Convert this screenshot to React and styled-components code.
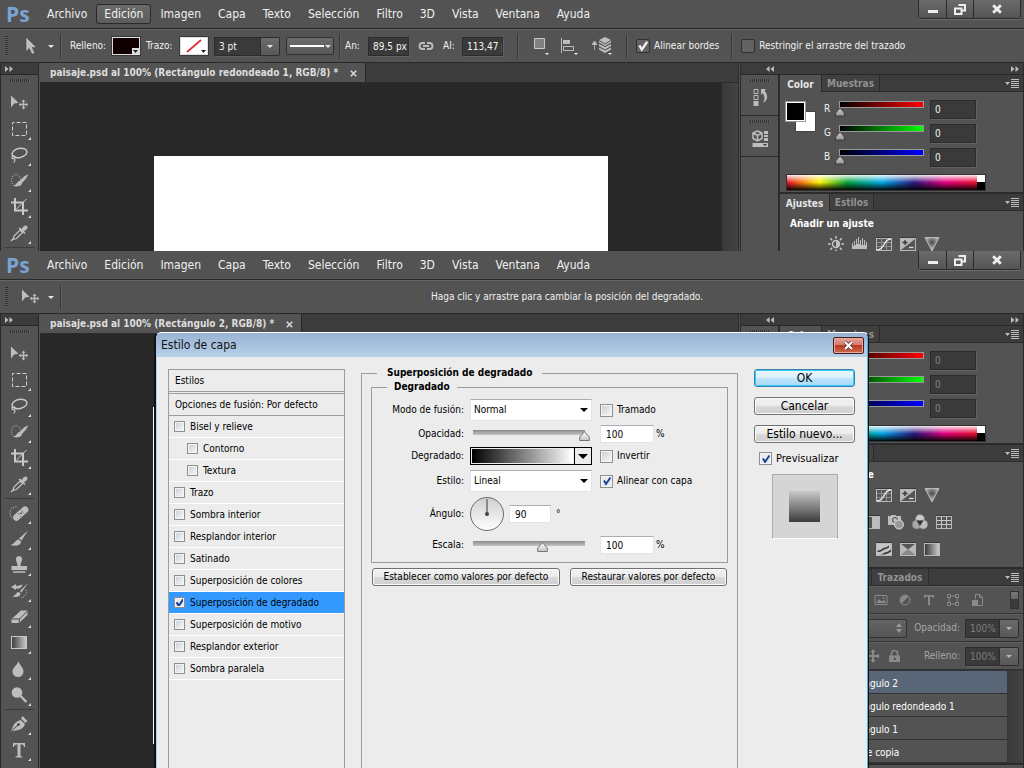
import { useId } from "react";
import styled, { createGlobalStyle, css } from "styled-components";

const uiFont = '"DejaVu Sans Condensed", "DejaVu Sans", sans-serif';
const logoFont = '"Open Sans", "Noto Sans", sans-serif';

const tick = (color) =>
  `url("data:image/svg+xml,%3Csvg xmlns='http://www.w3.org/2000/svg' viewBox='0 0 10 10'%3E%3Cpath d='M2 4.5 4 8 8.5 1.5' fill='none' stroke='%23${color}' stroke-width='2'/%3E%3C/svg%3E")`;
const thumb = (light, dark, line) =>
  `url("data:image/svg+xml,%3Csvg xmlns='http://www.w3.org/2000/svg' viewBox='0 0 11 10'%3E%3Cdefs%3E%3ClinearGradient id='g' x2='0' y2='1'%3E%3Cstop stop-color='%23${light}'/%3E%3Cstop offset='1' stop-color='%23${dark}'/%3E%3C/linearGradient%3E%3C/defs%3E%3Cpath d='M5.5.7 10.3 6v3.5H.7V6z' fill='url(%23g)' stroke='%23${line}'/%3E%3C/svg%3E")`;

const GlobalStyle = createGlobalStyle`
  * {
    box-sizing: border-box;
  }
  body {
    margin: 0;
    overflow: hidden;
    background: #535353;
    font-family: ${uiFont};
    font-size: 10px;
    line-height: 14px;
    color: #f0f0f0;
  }
  button, input, select {
    margin: 0;
    padding: 0;
    border: 0;
    border-radius: 0;
    background: none;
    font: inherit;
    color: inherit;
    appearance: none;
  }
  svg {
    display: block;
    flex: none;
  }
`;

/* ---------- window shell ---------- */

const Screen = styled.main`
  display: flex;
  flex-direction: column;
  height: 100vh;
`;

const Frame = styled.section`
  position: relative;
  display: flex;
  flex-direction: column;
  flex: ${({ $height }) => ($height ? `0 0 ${$height}` : "1 1 0")};
  min-height: 0;
  overflow: hidden;
  background: #535353;
`;

const MenuBar = styled.nav`
  display: flex;
  align-items: center;
  flex: none;
  height: 29px;
  border-bottom: 1px solid #282828;
  font-size: 12px;
`;

const Logo = styled.span`
  width: 39px;
  padding-left: 6px;
  font-family: ${logoFont};
  font-size: 21px;
  line-height: 24px;
  font-weight: 700;
  color: #79a3d4;
`;

const MenuItem = styled.button`
  height: 20px;
  padding: 0 7px;
  margin-right: 1px;
  border: 1px solid transparent;
  border-radius: 3px;
  ${({ $open }) =>
    $open &&
    css`
      border-color: #2a2a2a;
      background: linear-gradient(#6a6a6a, #5c5c5c);
    `}
`;

const WindowButtons = styled.div`
  display: flex;
  align-self: flex-start;
  margin: 0 3px 0 auto;
  border: 1px solid #2b2b2b;
  border-top: 0;
  border-radius: 0 0 3px 3px;
  box-shadow: 0 1px 0 #6c6c6c;
`;

const WindowButton = styled.button`
  display: grid;
  place-items: center;
  width: ${({ $wide }) => ($wide ? 47 : 27)}px;
  height: 18px;
  background: linear-gradient(#6b6b6b, #545454);
  & + & {
    border-left: 1px solid #2b2b2b;
  }
`;

const OptionsBar = styled.div`
  display: flex;
  align-items: center;
  flex: none;
  height: 33px;
  padding-left: 5px;
  border-top: 1px solid #666;
`;

const Grip = styled.span`
  flex: none;
  width: ${({ $flat }) => ($flat ? 20 : 3)}px;
  height: ${({ $flat }) => ($flat ? 3 : 20)}px;
  background: repeating-linear-gradient(
    ${({ $flat }) => ($flat ? "90deg" : "180deg")},
    #2f2f2f 0 1px,
    #5f5f5f 1px 2px
  );
`;

const Separator = styled.span`
  flex: none;
  width: 2px;
  height: 24px;
  margin: 0 ${({ $after = 0 }) => $after}px 0 ${({ $before = 0 }) => $before}px;
  border-left: 1px solid #373737;
  border-right: 1px solid #5f5f5f;
`;

const ToolButton = styled.button`
  display: flex;
  align-items: center;
  justify-content: ${({ $split }) => ($split ? "flex-end" : "center")};
  flex: none;
  gap: 9px;
  width: ${({ $width }) => $width}px;
  height: 26px;
  padding-right: ${({ $split }) => ($split ? 6 : 0)}px;
`;

const OptionLabel = styled.label`
  flex: none;
  width: ${({ $width }) => $width}px;
  white-space: nowrap;
`;

const Swatch = styled.button`
  flex: none;
  width: 28px;
  height: 18px;
  margin-right: 6px;
  border: 1px solid #ddd;
  outline: 1px solid #3a3a3a;
  background: ${({ $color }) => $color};
`;

const DarkInput = styled.input`
  flex: none;
  width: ${({ $width }) => $width}px;
  height: 19px;
  padding: 0 0 0 4px;
  border: 1px solid #2c2c2c;
  background: #3a3a3a;
  box-shadow: 1px 1px 0 #626262;
  color: ${({ $dim }) => ($dim ? "#7e7e7e" : "#f4f4f4")};
`;

const StrokeWidth = styled.div`
  display: flex;
  width: 66px;
  margin-right: 6px;
`;

const DropButton = styled.button`
  display: grid;
  place-items: center;
  flex: none;
  width: 19px;
  height: 19px;
  border: 1px solid #2c2c2c;
  border-left: 0;
  border-radius: 0 2px 2px 0;
  background: linear-gradient(#6b6b6b, #585858);
`;

const StrokeStyle = styled.button`
  display: flex;
  align-items: center;
  justify-content: center;
  width: 48px;
  height: 18px;
  border: 1px solid #303030;
  border-radius: 2px;
  background: linear-gradient(#6b6b6b, #585858);
`;

const DarkCheck = styled.input`
  width: 14px;
  height: 14px;
  border: 1px solid #303030;
  border-radius: 2px;
  background: #626262;
  &:checked {
    background: ${tick("f0f0f0")} center / 12px no-repeat #626262;
  }
`;

const CheckLabel = styled.label`
  display: flex;
  align-items: center;
  gap: 4px;
  white-space: nowrap;
`;

const Hint = styled.p`
  flex: 1;
  margin: 0 0 0 48px;
  text-align: center;
`;

const Workspace = styled.div`
  display: flex;
  flex: 1;
  min-height: 0;
  border-top: 1px solid #282828;
`;

/* ---------- left tool column ---------- */

const Toolbox = styled.aside`
  display: flex;
  flex-direction: column;
  align-items: center;
  flex: none;
  width: 39px;
  border-left: 1px solid #2b2b2b;
  border-right: 1px solid #2b2b2b;
`;

const StripHead = styled.div`
  display: flex;
  align-items: center;
  justify-content: space-between;
  align-self: stretch;
  flex: none;
  height: 12px;
  padding: 0 ${({ $right = 4 }) => $right}px 0 ${({ $left = 4 }) => $left}px;
  border-bottom: 1px solid #282828;
  background: #3c3c3c;
`;

const ToolGroup = styled.div`
  position: relative;
  display: flex;
  flex-direction: column;
  width: 29px;
  & + & {
    margin-top: 1px;
    border-top: 1px solid #3b3b3b;
    padding-top: 1px;
  }
`;

const Tool = styled.button`
  display: flex;
  align-items: center;
  justify-content: center;
  position: relative;
  width: 29px;
  height: 26px;
  padding-right: 2px;
  ${({ $more }) =>
    $more &&
    css`
      &::after {
        content: "";
        position: absolute;
        right: 3px;
        bottom: 2px;
        border-left: 3px solid transparent;
        border-bottom: 3px solid #dcdcdc;
      }
    `}
`;

/* ---------- document ---------- */

const Document = styled.div`
  display: flex;
  flex-direction: column;
  flex: 1;
  min-width: 0;
  margin: 0 1px;
  border-right: 1px solid #2b2b2b;
  background: #282828;
`;

const TabStrip = styled.div`
  display: flex;
  flex: none;
  height: 20px;
  border-bottom: 1px solid #2b2b2b;
  background: #3c3c3c;
`;

const DocTab = styled.div`
  display: flex;
  align-items: center;
  gap: 12px;
  padding: 1px 8px 0 10px;
  border-right: 1px solid #282828;
  background: #535353;
  color: #dedede;
  font-weight: 700;
  white-space: nowrap;
`;

const View = styled.div`
  display: flex;
  flex: 1;
  min-height: 0;
`;

const Canvas = styled.div`
  flex: 1;
  min-width: 0;
  padding: 73px 0 0 ${({ $inset }) => $inset}px;
  overflow: hidden;
`;

const Artboard = styled.div`
  width: 454px;
  height: 337px;
  background: #fff;
`;

const ScrollTrack = styled.div`
  flex: none;
  width: 16px;
  background: linear-gradient(90deg, #393939, #434343);
`;

/* ---------- right dock ---------- */

const Dock = styled.aside`
  display: flex;
  flex-direction: column;
  flex: none;
  width: 284px;
  border-left: 1px solid #2b2b2b;
  border-right: 1px solid #2b2b2b;
`;

const DockBody = styled.div`
  display: flex;
  flex: 1;
  min-height: 0;
`;

const IconColumn = styled.div`
  flex: none;
  width: 39px;
  border-right: 2px solid #2b2b2b;
`;

const IconBlock = styled.div`
  display: flex;
  flex-direction: column;
  align-items: center;
  gap: 5px;
  height: 41px;
  padding-top: 4px;
  border-bottom: 1px solid #2b2b2b;
`;

const Panels = styled.div`
  flex: 1;
  min-width: 0;
`;

const Panel = styled.section`
  height: ${({ $height }) => $height};
  border-bottom: 2px solid #2b2b2b;
`;

const PanelTabs = styled.div`
  display: flex;
  height: 17px;
  border-bottom: 1px solid #2b2b2b;
  background: #3c3c3c;
`;

const PanelTab = styled.button`
  min-width: ${({ $width }) => $width}px;
  height: ${({ $active }) => ($active ? 17 : 16)}px;
  padding-top: 2px;
  border-right: 1px solid #2b2b2b;
  background: ${({ $active }) => ($active ? "#535353" : "#404040")};
  color: ${({ $active }) => ($active ? "#e6e6e6" : "#929292")};
  font-weight: 700;
`;

const PanelMenu = styled.button`
  margin: 0 4px 0 auto;
`;

const ColorBody = styled.div`
  display: flex;
  padding: 5px 0 5px 5px;
`;

const SwatchPair = styled.div`
  position: relative;
  width: 39px;
  height: 72px;
`;

const ColorChip = styled.button`
  position: absolute;
  left: ${({ $back }) => ($back ? 11 : 1)}px;
  top: ${({ $back }) => ($back ? 15 : 5)}px;
  width: 19px;
  height: 19px;
  ${({ $back }) =>
    $back
      ? css`
          background: #fff;
          outline: 1px solid #444;
        `
      : css`
          border: 1px solid #fff;
          outline: 1px solid #999;
          background: #000;
        `}
`;

const Channels = styled.div`
  display: flex;
  flex-direction: column;
`;

const Channel = styled.div`
  display: flex;
  align-items: center;
  height: 24px;
`;

const ChannelName = styled.label`
  width: 11px;
`;

const ChannelRange = styled.input`
  width: 95px;
  height: 18px;
  background: linear-gradient(90deg, #000, ${({ $color }) => $color}) 5px 2px / 83px 5px no-repeat,
    linear-gradient(#999, #999) 4px 1px / 85px 7px no-repeat;
  &::-webkit-slider-thumb {
    appearance: none;
    width: 10px;
    height: 10px;
    margin-top: 6px;
    background: ${thumb("d8d8d8", "8c8c8c", "383838")} center / 100% 100%;
  }
`;

const Spectrum = styled.div`
  display: flex;
  width: 200px;
  height: 17px;
  margin-left: 6px;
  border: 1px solid #333;
`;

const Hues = styled.div`
  flex: 1;
  background: linear-gradient(rgba(255, 255, 255, 0.9), rgba(255, 255, 255, 0) 50%, rgba(0, 0, 0, 0) 50%, rgba(0, 0, 0, 0.95)),
    linear-gradient(90deg, #e8112d, #fff200 17%, #00a13a 32%, #00a8e8 50%, #2e1a80 67%, #e5007e 83%, #e8112d);
`;

const Mono = styled.div`
  width: 8px;
  background: linear-gradient(#fff 50%, #000 50%);
`;

const PanelTitle = styled.h2`
  margin: 0;
  padding: 6px 0 0 10px;
  font-size: 10px;
  line-height: 14px;
  font-weight: 700;
  color: #fff;
`;

const IconRow = styled.div`
  display: flex;
  gap: 8px;
  height: 27px;
  padding: 5px 0 0 ${({ $inset }) => $inset}px;
`;

const LayerBar = styled.div`
  display: flex;
  align-items: center;
  justify-content: flex-end;
  height: 28px;
  padding-right: 4px;
  border-bottom: 1px solid #333;
  border-top: 1px solid #606060;
  color: #a6a6a6;
`;

const FilterIcons = styled.div`
  display: flex;
  gap: 8px;
  margin-right: 25px;
`;

const FilterSwitch = styled.button`
  width: 9px;
  height: 18px;
  border: 1px solid #333;
  background: linear-gradient(#777, #666 45%, #3a3a3a 45%);
`;

const BlendBox = styled.select`
  flex: 1;
  height: 19px;
  margin: 0 7px 0 4px;
  padding-left: 5px;
  border: 1px solid #333;
  border-radius: 2px;
  background: url("data:image/svg+xml,%3Csvg xmlns='http://www.w3.org/2000/svg' viewBox='0 0 6 10'%3E%3Cpath d='M0 4 3 0 6 4zM0 6l3 4 3-4z' fill='%23999'/%3E%3C/svg%3E")
      right 4px center / 6px 10px no-repeat,
    linear-gradient(#646464, #555);
`;

const LayerLabel = styled.label`
  width: 51px;
  padding-right: 5px;
  text-align: right;
`;

const LayerView = styled.div`
  display: flex;
  border-top: 1px solid #333;
`;

const LayerList = styled.ul`
  flex: 1;
  margin: 0;
  padding: 0;
  list-style: none;
`;

const Layer = styled.li`
  height: 23px;
  padding: 6px 0 0 59px;
  border-bottom: 1px solid #333;
  background: ${({ $selected }) => ($selected ? "#596678" : "#535353")};
  color: #fff;
`;

/* ---------- layer style dialog ---------- */

const Dialog = styled.div`
  position: absolute;
  top: 81px;
  bottom: -20px;
  left: 155px;
  width: 714px;
  display: flex;
  flex-direction: column;
  overflow: hidden;
  border: 1px solid #111;
  border-top-color: #fff;
  border-radius: 6px 6px 0 0;
  background: #ececec;
  box-shadow: -1px 0 0 #111, inset 1px 0 0 #b5cfec, inset -1px 0 0 #4fb4e6;
  color: #000;
`;

const TitleBar = styled.header`
  display: flex;
  align-items: center;
  justify-content: space-between;
  flex: none;
  height: 24px;
  margin-right: 1px;
  padding: 0 3px 0 5px;
  background: linear-gradient(#98b4d2, #b7d0ea);
  color: #111;
  font-size: 12px;
`;

const CloseButton = styled.button`
  display: grid;
  place-items: center;
  width: 31px;
  height: 17px;
  border: 1px solid #4a1a1a;
  border-radius: 2px;
  background: linear-gradient(#e6a59b, #d3786b 48%, #b93a23 50%, #cf6a4c);
  box-shadow: inset 0 0 0 1px #e3aca2;
`;

const DialogBody = styled.div`
  display: flex;
  align-items: stretch;
  flex: 1;
  min-height: 0;
  padding: 12px 13px 0 12px;
`;

const StyleList = styled.div`
  flex: none;
  width: 177px;
  border: 1px solid #9c9c9c;
`;

const ListHead = styled.div`
  height: ${({ $double }) => ($double ? 24 : 22)}px;
  padding: 4px 6px 0;
  border-bottom: ${({ $double }) => ($double ? "3px double" : "1px solid")} #9c9c9c;
`;

const StyleRow = styled.div`
  display: flex;
  align-items: center;
  gap: 5px;
  height: 22px;
  padding-left: ${({ $nested }) => ($nested ? 18 : 5)}px;
  border-bottom: 1px solid #fff;
  background: ${({ $selected }) => ($selected ? "#3399ff" : "none")};
`;

const LightCheck = styled.input`
  flex: none;
  width: ${({ $size = 11 }) => $size}px;
  height: ${({ $size = 11 }) => $size}px;
  border: 1px solid #8e8f8f;
  background: linear-gradient(135deg, #c8ccd4, #fafafa);
  box-shadow: inset 0 0 0 1px #f4f4f4;
  &:checked {
    background: ${tick("24418c")} center / 10px no-repeat #e4ecf6;
  }
`;

const Group = styled.fieldset`
  flex: 1;
  min-width: 0;
  margin: -3px 16px 0;
  padding: 0 9px;
  border: 1px solid #9c9c9c;
`;

const GroupTitle = styled.legend`
  margin-left: ${({ $inset }) => $inset}px;
  padding: 0 ${({ $space }) => $space}px;
  line-height: 14px;
  font-weight: 700;
`;

const Inner = styled.fieldset`
  min-width: 0;
  margin: 0;
  padding: 0 0 4px;
  border: 1px solid #9c9c9c;
`;

const Fields = styled.div`
  display: grid;
  grid-template-columns: 92px 124px 1fr;
  grid-template-rows: 24px 24px 20px 30px 36px 26px;
  column-gap: 6px;
  align-items: center;
  margin-top: 4px;
`;

const FieldLabel = styled.label`
  text-align: right;
`;

const LightSelect = styled.select`
  width: 122px;
  height: 22px;
  padding: 0 3px;
  border: 1px solid #dfe3ea;
  border-top-color: #aaadb3;
  background: url("data:image/svg+xml,%3Csvg xmlns='http://www.w3.org/2000/svg' viewBox='0 0 8 4'%3E%3Cpath d='M0 0h8L4 4z'/%3E%3C/svg%3E")
    right 3px center / 8px 4px no-repeat #fff;
`;

const LightInput = styled.input`
  width: ${({ $width }) => $width}px;
  height: 18px;
  padding: 0 5px;
  border: 1px solid #dfe3ea;
  border-top-color: #aaadb3;
  background: #fff;
`;

const Trailing = styled.div`
  display: flex;
  align-items: center;
  gap: 2px;
`;

const Range = styled.input`
  width: 118px;
  height: 16px;
  margin-left: 2px;
  background: linear-gradient(#8a8a8a, #c4c4c4) 1px 4px / 112px 5px no-repeat;
  &::-webkit-slider-thumb {
    appearance: none;
    width: 11px;
    height: 10px;
    margin-top: 3px;
    background: ${thumb("ffffff", "c4c4c4", "757575")} center / 100% 100%;
  }
`;

const GradientPicker = styled.button`
  display: grid;
  grid-template-columns: 1fr 17px;
  width: 122px;
  height: 18px;
  border: 1px solid #000;
`;

const GradientBar = styled.span`
  margin: 1px;
  background: linear-gradient(90deg, #000, #fff);
`;

const GradientArrow = styled.span`
  display: grid;
  place-items: center;
  border-left: 1px solid #000;
`;

const AngleCell = styled.div`
  display: flex;
  align-items: center;
  gap: 5px;
`;

const DefaultButtons = styled.div`
  display: flex;
  gap: 10px;
  padding: 5px 1px;
`;

const Side = styled.div`
  display: flex;
  flex-direction: column;
  flex: none;
  gap: 10px;
  width: 101px;
`;

const LightButton = styled.button`
  height: 18px;
  flex: ${({ $grow }) => ($grow ? `${$grow} 1 0` : "none")};
  border: 1px solid #707070;
  border-radius: 3px;
  background: linear-gradient(#f2f2f2, #ebebeb 50%, #dadada 50%, #cfcfcf);
  box-shadow: inset 0 0 0 1px #fafafa;
  white-space: nowrap;
  ${({ $large }) => $large && `font-size: 12px;`}
  ${({ $primary }) =>
    $primary &&
    css`
      border-color: #3c7fb1;
      background: linear-gradient(#eaf6fd, #d9f0fc 50%, #bee6fd 50%, #a7d9f5);
      box-shadow: inset 0 0 0 1px #35cdf5;
    `}
`;

const PreviewLabel = styled.label`
  display: flex;
  align-items: center;
  gap: 4px;
  height: 11px;
  padding-left: 5px;
  font-size: 11px;
`;

const PreviewBox = styled.div`
  display: grid;
  place-items: center;
  align-self: center;
  width: 66px;
  height: 65px;
  border: 1px solid #aaa;
  border-bottom-color: #fff;
  background: #d5d5d5;
`;

const PreviewFill = styled.div`
  width: 31px;
  height: 31px;
  background: linear-gradient(#c9c9c9, #3c3c3c);
`;

/* ---------- drawings ---------- */

const Icon = ({ size = 18, w = size, h = size, children }) => (
  <svg width={w} height={h} viewBox={`0 0 ${w} ${h}`} fill="#bdbdbd" aria-hidden="true">
    {children}
  </svg>
);

const Caret = ({ color = "#e6e6e6", w = 6 }) => (
  <svg width={w} height={w / 2} viewBox="0 0 6 3" aria-hidden="true">
    <path d="M0 0h6L3 3z" fill={color} />
  </svg>
);

const Chevrons = ({ left }) => (
  <Icon w={8} h={6}>
    <path d={left ? "M3.500 0v6L0 3zM8 0v6L4.500 3z" : "M0 0v6l3.500-3zM4.500 0v6L8 3z"} />
  </Icon>
);

const Cross = ({ size = 7, width = 2, color = "#d8d8d8" }) => (
  <svg width={size} height={size} viewBox="0 0 7 7" aria-hidden="true">
    <path d="M.8.8l5.400 5.400M6.200.8.8 6.200" stroke={color} strokeWidth={width} />
  </svg>
);

const MoveIcon = () => (
  <Icon>
    <path d="M1 1.500v12l3.200-4 4.300-.8z" />
    <path d="M13.500 5.500l2 2.200h-1.300V9.800h2.100V8.500l2 2-2 2v-1.300h-2.100v2.100h1.300l-2 2.200-2-2.200h1.300v-2.100h-2.100v1.300l-2-2 2-2v1.300h2.100V7.700h-1.300z" />
  </Icon>
);

const toolIcons = {
  Mover: <MoveIcon />,
  Marco: (
    <Icon>
      <rect x="2.500" y="2.500" width="14" height="13" fill="none" stroke="#d0d0d0" strokeDasharray="4 2" strokeDashoffset="2" />
    </Icon>
  ),
  Lazo: (
    <Icon>
      <ellipse cx="9.500" cy="7" rx="7.500" ry="4.500" fill="none" stroke="#c8c8c8" strokeWidth="1.500" transform="rotate(-12 9.500 7)" />
      <path d="M3 9.500c-2 1.500-1 4 1 3s1-3-.5-2.500M4 12.500c1.500 1 1 3-.5 4" fill="none" stroke="#c8c8c8" strokeWidth="1.200" />
    </Icon>
  ),
  "Selección rápida": (
    <Icon>
      <ellipse cx="6" cy="8.500" rx="4.500" ry="6" fill="none" stroke="#c8c8c8" strokeDasharray="1 1.500" />
      <path d="M18.500 2l-4.500 2.500-4.500 4.500 2.500 2 4-4.500zM9.500 9c-3 .5-2 3.500-6 4.500 3 1.500 8.500 1 8.500-2.500z" />
    </Icon>
  ),
  Recortar: (
    <Icon>
      <path d="M5 0v12.500h13M1 4.500h12V17" fill="none" stroke="#c8c8c8" strokeWidth="2" />
      <path d="M6.500 11 16.500 1" fill="none" stroke="#c8c8c8" />
    </Icon>
  ),
  Cuentagotas: (
    <Icon>
      <path d="M3 15.500l1-3.500 6-6 2.500 2.500-6 6zM1 17l2-2" fill="none" stroke="#c8c8c8" strokeWidth="1.200" />
      <path d="M8.500 4.500l1.500-1L12 5c1-3 3.500-4.500 5-3s0 4-3 5l1.500 2-1 1z" />
    </Icon>
  ),
  "Pincel corrector": (
    <Icon w={20} h={18}>
      <path d="M8 15c-5 1-7-2-7-6s3-7 8-6" fill="none" stroke="#d0d0d0" strokeDasharray="1 1.500" />
      <rect x="2.500" y="6" width="18" height="6.500" rx="3" transform="rotate(-42 12 9)" />
      <path d="M8.500 9l4 4M11.500 5.500l4 4.500" stroke="#555" strokeDasharray="1 1" />
      <path d="M12 8.500v1.500" stroke="#444" strokeWidth="1.500" />
    </Icon>
  ),
  Pincel: (
    <Icon>
      <path d="M18 .5 9 8.500l2.500 2zM8.500 9.500c-3 0-3 4-8 5.500 4 1.500 10.500 1 10.500-3.500z" />
    </Icon>
  ),
  Tampón: (
    <Icon>
      <path d="M9 0a3.300 3.300 0 0 1 3 4.500C11.500 6 10.500 7 10.500 10H17v4H1.500v-4h6C7.500 7 6.500 6 6 4.500A3.300 3.300 0 0 1 9 0zM3 15.200h12.500v1.500H3z" />
    </Icon>
  ),
  Historia: (
    <Icon>
      <path d="M18 1 10 9l1.500 1.500zM9 10c-3 0-2.500 3-7 4.500 4 1 8.500.5 8.500-3zM1 5l5-3v2c4 0 5-2 6.500-1C11 6.500 9 7 6 6.500V8z" />
      <path d="M16 8c1 4-1 7-5 8" fill="none" stroke="#c8c8c8" strokeDasharray="1 1.500" />
    </Icon>
  ),
  Borrador: (
    <Icon>
      <path d="M11 2.500h6.500V7L9 15H1.500V11z" />
      <path d="M2 11h7.500l8-8M9.500 11 9 15" fill="none" stroke="#4a4a4a" />
    </Icon>
  ),
  Degradado: (
    <Icon>
      <defs>
        <linearGradient id="toolGradient">
          <stop stopColor="#3a3a3a" />
          <stop offset="1" stopColor="#ccc" />
        </linearGradient>
      </defs>
      <rect x="1.500" y="2.500" width="15" height="12" fill="url(#toolGradient)" stroke="#c8c8c8" />
    </Icon>
  ),
  Desenfocar: (
    <Icon>
      <path d="M8.500 1c1 4 5 6.500 5 10.500a5.500 5.500 0 0 1-11 0C2.500 7.500 7.500 5 8.500 1z" />
    </Icon>
  ),
  Sobreexponer: (
    <Icon>
      <circle cx="7" cy="6.500" r="5.300" />
      <path d="M10.500 10l6 6" stroke="#bdbdbd" strokeWidth="2.400" />
    </Icon>
  ),
  Pluma: (
    <Icon>
      <path d="M1 16.500C3 12 3.500 7 10.500 5l4.500 4C13 15.500 7 15 1 16.500zM11 3.500l1.500-2.500 5 5-2 2z" />
      <path d="M1.500 16 8 10" stroke="#3c3c3c" />
      <circle cx="8.500" cy="9.500" r="1.300" fill="#3c3c3c" />
    </Icon>
  ),
  Tipo: (
    <Icon>
      <path d="M3 2h12v4h-1c-.3-2-1-2.500-3.500-2.500V14c0 1.300.5 1.500 2 1.500v1h-7v-1c1.500 0 2-.2 2-1.500V3.500C5 3.500 4.300 4 4 6H3z" />
    </Icon>
  ),
};

const toolGroups = [
  ["Mover", "Marco", "Lazo", "Selección rápida", "Recortar", "Cuentagotas"],
  ["Pincel corrector", "Pincel", "Tampón", "Historia", "Borrador", "Degradado", "Desenfocar", "Sobreexponer"],
  ["Pluma", "Tipo"],
];

const AdjustBox = ({ children }) => (
  <Icon size={16}>
    <rect x="0" y="1" width="16" height="14" fill="#3a3a3a" />
    <rect x=".5" y="2.500" width="15" height="12" fill="#555" stroke="#b8b8b8" />
    {children}
  </Icon>
);

const adjustRows = [
  {
    inset: 48,
    icons: [
      <Icon size={16}>
        <circle cx="8" cy="8" r="3.500" fill="none" stroke="#c8c8c8" strokeWidth="1.500" />
        <path d="M8 4.500a3.500 3.500 0 0 1 0 7z" />
        <path d="M8 0v2.500M8 13.500V16M0 8h2.500M13.500 8H16M2.300 2.300l1.800 1.800M11.900 11.900l1.800 1.800M2.300 13.700l1.800-1.800M11.900 4.100l1.800-1.800" stroke="#c8c8c8" strokeWidth="1.500" />
      </Icon>,
      <Icon size={16}>
        <path d="M0 13V7h1v3h1V5h1v4h1V3h1v5h1V1h1v7h1V4h1v5h1V2h1v7h1V4h1v5h1V6h1v7z" />
      </Icon>,
      <AdjustBox>
        <path d="M5.500 2v12M10.500 2v12M1 6.500h14M1 10.500h14" stroke="#8d8d8d" />
        <path d="M1 14c8 0 6-11 14-11" fill="none" stroke="#e8e8e8" strokeWidth="1.500" />
      </AdjustBox>,
      <AdjustBox>
        <path d="M1 14 15 3H1z" fill="#b8b8b8" />
        <path d="M2.500 6.500h5M5 4v5" stroke="#333" strokeWidth="1.300" />
        <path d="M9 11.500h4.500" stroke="#ddd" strokeWidth="1.300" />
      </AdjustBox>,
      <Icon size={16}>
        <defs>
          <radialGradient id="vibrance" cx=".5" cy=".35" r=".6">
            <stop stopColor="#4a4a4a" />
            <stop offset="1" stopColor="#ccc" />
          </radialGradient>
        </defs>
        <path d="M1 1.500h14L8 15z" fill="url(#vibrance)" stroke="#b8b8b8" />
      </Icon>,
    ],
  },
  {
    inset: 36,
    icons: [
      <AdjustBox>
        <rect x="2" y="9" width="12" height="4" />
      </AdjustBox>,
      <Icon size={16}>
        <path d="M8 2v12M2 4h12M0 10l2-5 3 5zM11 10l2-5 3 5z" stroke="#b8b8b8" />
      </Icon>,
      <AdjustBox>
        <rect x="8" y="3" width="7" height="11" />
      </AdjustBox>,
      <Icon size={16}>
        <path d="M0 2h3V1h5v1h5v9H0z" />
        <circle cx="7" cy="6" r="2.500" fill="#bdbdbd" stroke="#444" />
        <circle cx="11" cy="10.500" r="4.500" fill="#9a9a9a" stroke="#ddd" />
      </Icon>,
      <Icon size={16}>
        <circle cx="8" cy="5" r="4.500" fill="#ccc" stroke="#777" strokeWidth=".5" />
        <circle cx="4.700" cy="10.500" r="4.500" fill="#a6a6a6" stroke="#777" strokeWidth=".5" />
        <circle cx="11.300" cy="10.500" r="4.500" fill="#bdbdbd" stroke="#777" strokeWidth=".5" />
        <path d="M4.500 6.500h7L8 12z" fill="#333" />
      </Icon>,
      <AdjustBox>
        <path d="M5.500 2v12M10.500 2v12M1 6.500h14M1 10.500h14" stroke="#c8c8c8" />
      </AdjustBox>,
    ],
  },
  {
    inset: 48,
    icons: [
      <AdjustBox>
        <path d="M1 14V3h14z" />
      </AdjustBox>,
      <AdjustBox>
        <path d="M1 14 15 3v11z" />
      </AdjustBox>,
      <AdjustBox>
        <path d="M1 3h14v11H1z" fill="#c4c4c4" />
        <path d="M1.500 9.500c3 0 4-1 5.500-2.500 2 0 4-1 6-2.500v2c-2 1-3 2-5 2-2 2-4 2.500-6.500 2.500zM3 13.500c3 0 4-1 5.500-2 2 0 4-1 6.500-3v2c-2 1.500-3 2.500-5 2.500l-1.500.5z" fill="#3c3c3c" />
      </AdjustBox>,
      <AdjustBox>
        <path d="M1 3l7 5.500L1 14zM15 3 8 8.500 15 14z" fill="#b8b8b8" />
        <path d="M1 14l7-5.500L15 14z" fill="#8a8a8a" />
      </AdjustBox>,
      <AdjustBox>
        <rect x="1" y="3" width="14" height="11" fill="url(#toolGradient)" />
      </AdjustBox>,
    ],
  },
];

const Check = ({ label, size, checked, Row = CheckLabel, Box = LightCheck }) => {
  const id = useId();
  return (
    <Row htmlFor={id}>
      <Box id={id} type="checkbox" defaultChecked={checked} $size={size} />
      {label}
    </Row>
  );
};

/* ---------- parts ---------- */

const menus = ["Archivo", "Edición", "Imagen", "Capa", "Texto", "Selección", "Filtro", "3D", "Vista", "Ventana", "Ayuda"];

const Menu = ({ open }) => (
  <MenuBar>
    <Logo>Ps</Logo>
    {menus.map((name) => (
      <MenuItem key={name} $open={name === open}>
        {name}
      </MenuItem>
    ))}
    <WindowButtons>
      <WindowButton aria-label="Minimizar">
        <Icon w={10} h={10}>
          <path d="M0 6h10v3H0z" fill="#eee" />
        </Icon>
      </WindowButton>
      <WindowButton aria-label="Restaurar">
        <Icon w={12} h={11}>
          <path d="M4.500 1h6.500v5.500H8M1 4.500h6.500V10H1z" fill="none" stroke="#eee" strokeWidth="2" />
        </Icon>
      </WindowButton>
      <WindowButton aria-label="Cerrar" $wide>
        <Cross size={10} color="#eee" />
      </WindowButton>
    </WindowButtons>
  </MenuBar>
);

const ToolGrip = styled(Grip)`
  margin: 4px 0 8px;
`;

const Toolbar = () => (
  <Toolbox>
    <StripHead>
      <Chevrons />
    </StripHead>
    <ToolGrip $flat />
    {toolGroups.map((group) => (
      <ToolGroup key={group[0]}>
        {group.map((name) => (
          <Tool key={name} aria-label={name} $more={name !== "Mover"}>
            {toolIcons[name]}
          </Tool>
        ))}
      </ToolGroup>
    ))}
  </Toolbox>
);

const Tabs = ({ items, active }) => (
  <PanelTabs>
    {items.map(([name, width]) => (
      <PanelTab key={name} $active={name === active} $width={width}>
        {name}
      </PanelTab>
    ))}
    <PanelMenu aria-label="Menú del panel">
      <Icon w={14} h={9}>
        <path d="M0 3h5L2.500 6zM6 0h8v1H6zM6 2h8v1H6zM6 4h8v1H6zM6 6h8v1H6zM6 8h8v1H6z" />
      </Icon>
    </PanelMenu>
  </PanelTabs>
);

const ColorChannel = ({ name, color, dim }) => {
  const id = useId();
  return (
    <Channel>
      <ChannelName htmlFor={id}>{name}</ChannelName>
      <ChannelRange id={id} type="range" max="255" defaultValue="0" $color={color} />
      <DarkInput aria-label={`Valor ${name}`} defaultValue="0" $width={46} $dim={dim} />
    </Channel>
  );
};

const PercentField = ({ label }) => {
  const id = useId();
  return (
    <>
      <LayerLabel htmlFor={id}>{label}</LayerLabel>
      <DarkInput id={id} defaultValue="100%" $width={35} $dim />
      <DropButton aria-label={`Elegir ${label}`}>
        <Caret color="#b5b5b5" />
      </DropButton>
    </>
  );
};

const layers = ["Rectángulo 2", "Rectángulo redondeado 1", "Rectángulo 1", "Bosque copia"];

const LayersPanel = () => (
  <Panel $height="auto">
    <Tabs items={[["Capas", 42], ["Canales", 50], ["Trazados", 57]]} active="Capas" />
    <LayerBar>
      <FilterIcons>
        <Icon size={16}>
          <path d="M2 3.500h12v9H2z" fill="none" stroke="#8a8a8a" />
          <path d="M3 11l3-4 2.500 2.500L11 8l2 3z" fill="#8a8a8a" />
          <circle cx="10.500" cy="6" r="1" fill="#8a8a8a" />
        </Icon>
        <Icon size={16}>
          <circle cx="8" cy="8" r="5" fill="none" stroke="#8a8a8a" />
          <path d="M4.500 11.500a5 5 0 0 1 7-7z" fill="#8a8a8a" />
        </Icon>
        <Icon size={16}>
          <path d="M3 3h10v3h-1c0-1-.5-1.500-3-1.500V12c0 .7.500 1 1.500 1h-5c1 0 1.500-.3 1.500-1V4.500C4.500 4.500 4 5 4 6H3z" fill="#8a8a8a" />
        </Icon>
        <Icon size={16}>
          <path d="M4 4h8v8H4z" fill="none" stroke="#8a8a8a" />
          <path d="M2.500 2.500h3v3h-3zM10.500 2.500h3v3h-3zM2.500 10.500h3v3h-3zM10.500 10.500h3v3h-3z" fill="#535353" stroke="#8a8a8a" />
        </Icon>
        <Icon size={16}>
          <path d="M6.500 7V2.500h4l3 3v8h-5M10.500 2.500v3h3" fill="none" stroke="#8a8a8a" />
          <path d="M3 8h6v6H3z" fill="#8a8a8a" />
        </Icon>
      </FilterIcons>
      <FilterSwitch aria-label="Activar filtro" />
    </LayerBar>
    <LayerBar>
      <BlendBox aria-label="Modo de fusión de capa">
        <option>Normal</option>
      </BlendBox>
      <PercentField label="Opacidad:" />
    </LayerBar>
    <LayerBar>
      <Icon size={14}>
        <path d="M7 0l2.500 3H8v3h3V4.500L14 7l-3 2.500V8H8v3h1.500L7 14l-2.500-3H6V8H3v1.500L0 7l3-2.500V6h3V3H4.500z" fill="#8a8a8a" />
      </Icon>
      <Icon w={34} h={14}>
        <path d="M11.500 7V4.500a3 3 0 0 1 6 0V7" fill="none" stroke="#8a8a8a" strokeWidth="1.500" />
        <path d="M9 6.500h11V13H9z" fill="#8a8a8a" />
        <path d="M14 8.500h1.500V11H14z" fill="#444" />
      </Icon>
      <PercentField label="Relleno:" />
    </LayerBar>
    <LayerView>
      <LayerList>
        {layers.map((name, i) => (
          <Layer key={name} $selected={i === 0}>
            {name}
          </Layer>
        ))}
      </LayerList>
      <ScrollTrack />
    </LayerView>
  </Panel>
);

const RightDock = ({ dim }) => (
  <Dock>
    <StripHead $left={25}>
      <Chevrons left />
      <Chevrons />
    </StripHead>
    <DockBody>
      <IconColumn>
        <IconBlock>
          <Grip $flat />
          <Icon size={20}>
            <path d="M4 2.500h4v4H4zM4 8.500h4v4H4z" fill="none" stroke="#bdbdbd" />
            <path d="M3.500 14h5v5h-5zM11 2h5L14.500 4c4 4 3.500 9-1.500 12 2-4 2-7-.5-10L11 8z" />
          </Icon>
        </IconBlock>
        <IconBlock>
          <Grip $flat />
          <Icon size={20}>
            <path d="M7.500 3l4.500 2v5.500l-4.500 2.500L3 10.500V5zM3 5l4.500 2.500L12 5M7.500 7.500V13" fill="none" stroke="#bdbdbd" strokeWidth="1.500" />
            <path d="M14 3h4v3h-4zM14 7h4v2h-4zM14 10h4v3h-4zM2.500 15H18v4H2.500z" />
            <path d="M13 16h4l-2 2z" fill="#333" />
          </Icon>
        </IconBlock>
      </IconColumn>
      <Panels>
        <Panel $height="119px">
          <Tabs items={[["Color", 42], ["Muestras", 58]]} active="Color" />
          <ColorBody>
            <SwatchPair>
              <ColorChip aria-label="Color de fondo" $back />
              <ColorChip aria-label="Color frontal" />
            </SwatchPair>
            <Channels>
              <ColorChannel name="R" color="#f00" dim={dim} />
              <ColorChannel name="G" color="#0f0" dim={dim} />
              <ColorChannel name="B" color="#00f" dim={dim} />
            </Channels>
          </ColorBody>
          <Spectrum>
            <Hues />
            <Mono />
          </Spectrum>
        </Panel>
        <Panel $height="124px">
          <Tabs items={[["Ajustes", 50], ["Estilos", 44]]} active="Ajustes" />
          <PanelTitle>Añadir un ajuste</PanelTitle>
          {adjustRows.map(({ inset, icons }, i) => (
            <IconRow key={i} $inset={inset}>
              {icons.map((icon, n) => (
                <span key={n}>{icon}</span>
              ))}
            </IconRow>
          ))}
        </Panel>
        <LayersPanel />
      </Panels>
    </DockBody>
  </Dock>
);

const PsWindow = ({ height, openMenu, options, title, inset, dim, children }) => (
  <Frame $height={height}>
    <Menu open={openMenu} />
    <OptionsBar>{options}</OptionsBar>
    <Workspace>
      <Toolbar />
      <Document>
        <TabStrip>
          <DocTab>
            {title}
            <Cross width={1.6} />
          </DocTab>
        </TabStrip>
        <View>
          <Canvas $inset={inset}>
            <Artboard />
          </Canvas>
          <ScrollTrack />
        </View>
      </Document>
      <RightDock dim={dim} />
    </Workspace>
    {children}
  </Frame>
);

const ShapeOptions = () => (
  <>
    <Grip />
    <ToolButton aria-label="Selección de trazado" $width={52} $split>
      <Icon w={22} h={18}>
        <path d="M9 0v14.500l3.200-3 2.800 5.800 2.800-1.300-2.600-5.500h4.300z" stroke="#3a3a3a" strokeWidth=".5" />
      </Icon>
      <Caret />
    </ToolButton>
    <Separator $after={8} />
    <OptionLabel $width={42} htmlFor="fill">
      Relleno:
    </OptionLabel>
    <Swatch id="fill" $color="#120000">
      <Icon w={26} h={16}>
        <path d="M19 10h7v6h-7z" fill="#ddd" />
        <path d="M20 12h5l-2.500 3z" fill="#222" />
      </Icon>
    </Swatch>
    <OptionLabel $width={34} htmlFor="stroke">
      Trazo:
    </OptionLabel>
    <Swatch id="stroke" $color="#fff">
      <Icon w={26} h={16}>
        <path d="M6 14 20 2" stroke="#d9333a" strokeWidth="1.800" />
        <path d="M20 12h5l-2.500 3z" fill="#222" />
      </Icon>
    </Swatch>
    <StrokeWidth>
      <DarkInput aria-label="Anchura de trazo" defaultValue="3 pt" $width={47} />
      <DropButton aria-label="Elegir anchura">
        <Caret />
      </DropButton>
    </StrokeWidth>
    <StrokeStyle aria-label="Tipo de trazo">
      <Icon w={42} h={6}>
        <path d="M1 2h34v2H1z" fill="#fff" />
        <path d="M36 2h6l-3 3z" fill="#e6e6e6" />
      </Icon>
    </StrokeStyle>
    <Separator $before={5} $after={4} />
    <OptionLabel $width={23} htmlFor="width">
      An:
    </OptionLabel>
    <DarkInput id="width" defaultValue="89,5 px" $width={41} />
    <ToolButton aria-label="Enlazar anchura y altura" $width={34}>
      <Icon w={16} h={10}>
        <path d="M7 2H4.500a3 3 0 0 0 0 6H7M9 2h2.500a3 3 0 0 1 0 6H9M5 5h6" fill="none" stroke="#bdbdbd" strokeWidth="1.800" />
      </Icon>
    </ToolButton>
    <OptionLabel $width={19} htmlFor="height">
      Al:
    </OptionLabel>
    <DarkInput id="height" defaultValue="113,47 px" $width={41} />
    <Separator $before={14} $after={8} />
    <ToolButton aria-label="Operaciones de trazado" $width={25}>
      <Icon w={18} h={20}>
        <path d="M3.500 2.500h10v10h-10z" fill="#808080" stroke="#c8c8c8" />
        <path d="M14 17h4l-2 2z" fill="#eee" />
      </Icon>
    </ToolButton>
    <ToolButton aria-label="Alineación" $width={34}>
      <Icon w={18} h={20}>
        <path d="M1 2h1v15H1zM3 4h7v4H3z" />
        <path d="M3.500 10.500h10v4h-10z" fill="none" stroke="#bdbdbd" />
        <path d="M14 17h4l-2 2z" fill="#eee" />
      </Icon>
    </ToolButton>
    <ToolButton aria-label="Disposición" $width={32}>
      <Icon w={20} h={20}>
        <path d="M7 11.500l6 3 6-3v2l-6 3.500-6-3.500zM7 8l6 3 6-3v2l-6 3.500L7 10zM13 1l6 3-6 3.500L7 4zM7 5l6 3.500L19 5v1.500l-6 3.500-6-3.500z" />
        <path d="M2.500 14V7M0 8.500h5L2.500 5z" stroke="#bdbdbd" strokeWidth=".8" />
        <path d="M16 17h4l-2 2z" fill="#eee" />
      </Icon>
    </ToolButton>
    <Separator $before={8} $after={8} />
    <Check label="Alinear bordes" checked Box={DarkCheck} />
    <Separator $before={12} $after={8} />
    <Check label="Restringir el arrastre del trazado" Box={DarkCheck} />
  </>
);

const MoveOptions = () => (
  <>
    <Grip />
    <ToolButton aria-label="Mover" $width={52} $split>
      <MoveIcon />
      <Caret />
    </ToolButton>
    <Separator />
    <Hint>Haga clic y arrastre para cambiar la posición del degradado.</Hint>
  </>
);

const effects = [
  { name: "Bisel y relieve" },
  { name: "Contorno", nested: true },
  { name: "Textura", nested: true },
  { name: "Trazo" },
  { name: "Sombra interior" },
  { name: "Resplandor interior" },
  { name: "Satinado" },
  { name: "Superposición de colores" },
  { name: "Superposición de degradado", selected: true },
  { name: "Superposición de motivo" },
  { name: "Resplandor exterior" },
  { name: "Sombra paralela" },
];

const EffectRow = ({ name, nested, selected }) => {
  const id = useId();
  return (
    <StyleRow $nested={nested} $selected={selected}>
      <LightCheck id={id} type="checkbox" defaultChecked={selected} />
      <label htmlFor={id}>{name}</label>
    </StyleRow>
  );
};

const LayerStyleDialog = () => (
  <Dialog role="dialog" aria-label="Estilo de capa">
    <TitleBar>
      Estilo de capa
      <CloseButton aria-label="Cerrar diálogo">
        <svg width="11" height="9" viewBox="0 0 11 9" aria-hidden="true">
          <path d="M2 1l7 7M9 1 2 8" stroke="#5a3030" strokeWidth="3.600" />
          <path d="M2 1l7 7M9 1 2 8" stroke="#fff" strokeWidth="2.200" />
        </svg>
      </CloseButton>
    </TitleBar>
    <DialogBody>
      <StyleList>
        <ListHead $double>Estilos</ListHead>
        <ListHead>Opciones de fusión: Por defecto</ListHead>
        {effects.map((effect) => (
          <EffectRow key={effect.name} {...effect} />
        ))}
      </StyleList>
      <Group>
        <GroupTitle $inset={6} $space={10}>
          Superposición de degradado
        </GroupTitle>
        <Inner>
          <GroupTitle $inset={15} $space={7}>
            Degradado
          </GroupTitle>
          <Fields>
            <FieldLabel htmlFor="mode">Modo de fusión:</FieldLabel>
            <LightSelect id="mode">
              <option>Normal</option>
            </LightSelect>
            <Check label="Tramado" size={13} />

            <FieldLabel htmlFor="opacity">Opacidad:</FieldLabel>
            <Range id="opacity" type="range" defaultValue="100" />
            <Trailing>
              <LightInput aria-label="Opacidad en porcentaje" defaultValue="100" $width={54} />%
            </Trailing>

            <FieldLabel htmlFor="gradient">Degradado:</FieldLabel>
            <GradientPicker id="gradient">
              <GradientBar />
              <GradientArrow>
                <Caret color="#000" w={10} />
              </GradientArrow>
            </GradientPicker>
            <Check label="Invertir" size={13} />

            <FieldLabel htmlFor="style">Estilo:</FieldLabel>
            <LightSelect id="style">
              <option>Lineal</option>
            </LightSelect>
            <Check label="Alinear con capa" size={13} checked />

            <FieldLabel htmlFor="angle">Ángulo:</FieldLabel>
            <AngleCell>
              <svg width="34" height="34" viewBox="0 0 34 34" aria-hidden="true">
                <defs>
                  <linearGradient id="dial" x2="0" y2="1">
                    <stop stopColor="#cfcfcf" />
                    <stop offset="1" stopColor="#fff" />
                  </linearGradient>
                </defs>
                <circle cx="17" cy="17" r="16.500" fill="url(#dial)" stroke="#6c6c6c" />
                <path d="M17 2v15" stroke="#8a8a8a" strokeWidth="2" />
                <circle cx="17" cy="17" r="2" fill="#444" />
              </svg>
              <LightInput id="angle" defaultValue="90" $width={42} />°
            </AngleCell>
            <span />

            <FieldLabel htmlFor="scale">Escala:</FieldLabel>
            <Range id="scale" type="range" min="0" max="165" defaultValue="100" />
            <Trailing>
              <LightInput aria-label="Escala en porcentaje" defaultValue="100" $width={54} />%
            </Trailing>
          </Fields>
        </Inner>
        <DefaultButtons>
          <LightButton $grow={188}>Establecer como valores por defecto</LightButton>
          <LightButton $grow={157}>Restaurar valores por defecto</LightButton>
        </DefaultButtons>
      </Group>
      <Side>
        <LightButton $large $primary>
          OK
        </LightButton>
        <LightButton $large>Cancelar</LightButton>
        <LightButton $large>Estilo nuevo...</LightButton>
        <Check label="Previsualizar" size={13} checked Row={PreviewLabel} />
        <PreviewBox>
          <PreviewFill />
        </PreviewBox>
      </Side>
    </DialogBody>
  </Dialog>
);

export default function App() {
  return (
    <>
      <GlobalStyle />
      <Screen>
        <PsWindow
          height="251px"
          openMenu="Edición"
          options={<ShapeOptions />}
          title="paisaje.psd al 100% (Rectángulo redondeado 1, RGB/8) *"
          inset={114}
        />
        <PsWindow
          options={<MoveOptions />}
          title="paisaje.psd al 100% (Rectángulo 2, RGB/8) *"
          inset={113}
          dim
        >
          <LayerStyleDialog />
        </PsWindow>
      </Screen>
    </>
  );
}
